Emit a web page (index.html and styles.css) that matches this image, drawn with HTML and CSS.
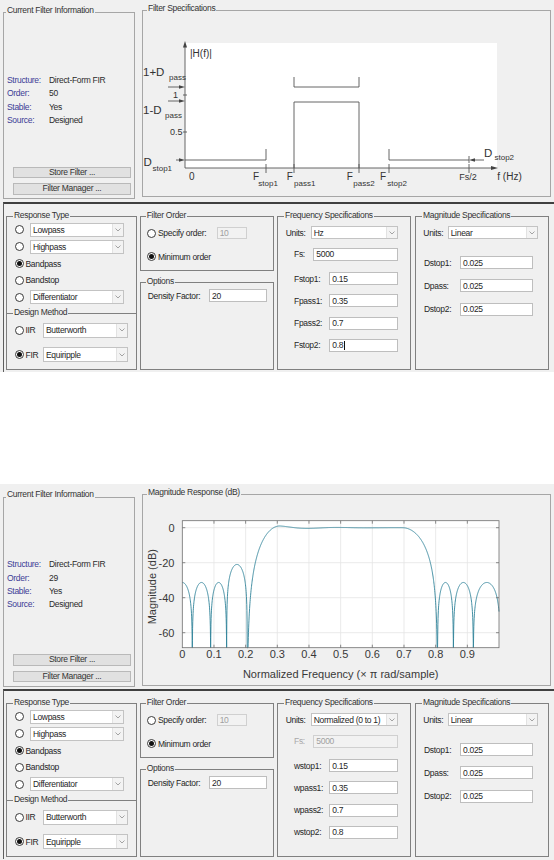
FILE: index.html
```html
<!DOCTYPE html>
<html>
<head>
<meta charset="utf-8">
<title>Filter Designer</title>
<link rel="stylesheet" href="styles.css">
</head>
<body>

<div class="shot">
  <div class="top-row">
    <div class="panel info-panel">
      <div class="ptitle">Current Filter Information</div>
      <div class="info">
        <div class="info-row"><span class="ilabel">Structure:</span><span>Direct-Form FIR</span></div>
        <div class="info-row"><span class="ilabel">Order:</span><span>50</span></div>
        <div class="info-row"><span class="ilabel">Stable:</span><span>Yes</span></div>
        <div class="info-row"><span class="ilabel">Source:</span><span>Designed</span></div>
      </div>
      <div class="btns">
        <div class="btn">Store Filter ...</div>
        <div class="btn">Filter Manager ...</div>
      </div>
    </div>
    <div class="panel spec-panel">
      <div class="ptitle">Filter Specifications</div>
      <svg class="plot spec-plot" width="407" height="185" viewBox="143 11 407 185">
        <rect x="185" y="43" width="312" height="125" fill="#ffffff"/>
        <g class="ln">
          <path d="M185 168 V46"/>
          <path d="M185 168 H492"/>
          <path d="M183 95 H187 M183 132 H187"/>
          <path d="M168 87 H180 M168 101 H180 M176 160 H180"/>
          <path d="M185 160 H266 M266 160 V149"/>
          <path d="M266 164 V173 M294 164 V173 M359 164 V173 M389 164 V173 M469 164 V173"/>
          <path d="M294 77 V87 H359 V77"/>
          <path d="M294 168 V102 H359 V168"/>
          <path d="M389 149 V160 H469 M469 156 V163"/>
          <path d="M484 160 H475"/>
        </g>
        <g class="arr">
          <polygon points="185,41 183,47.5 187,47.5"/>
          <polygon points="498,168 491,166 491,170"/>
          <polygon points="185,87 179,85.2 179,88.8"/>
          <polygon points="185,101 179,99.2 179,102.8"/>
          <polygon points="185,160 179,158.2 179,161.8"/>
          <polygon points="469,160 475,158.2 475,161.8"/>
        </g>
        <g class="lbl">
          <text x="190" y="56.5" class="t10">|H(f)|</text>
          <text x="143" y="76.3" class="t11">1+D</text><text x="169" y="80" class="t8">pass</text>
          <text x="173" y="98.3" class="t9">1</text>
          <text x="143" y="113.5" class="t11">1-D</text><text x="165" y="117.8" class="t8">pass</text>
          <text x="170" y="135" class="t9">0.5</text>
          <text x="143.5" y="166" class="t11">D</text><text x="152.5" y="171" class="t8">stop1</text>
          <text x="189" y="180.3" class="t10">0</text>
          <text x="253" y="180.3" class="t10">F</text><text x="258.3" y="185.5" class="t8">stop1</text>
          <text x="286.7" y="180.3" class="t10">F</text><text x="294" y="185.5" class="t8">pass1</text>
          <text x="346.7" y="180.3" class="t10">F</text><text x="353.3" y="185.5" class="t8">pass2</text>
          <text x="380" y="180.3" class="t10">F</text><text x="387.3" y="185.5" class="t8">stop2</text>
          <text x="459.3" y="180.3" class="t9">Fs/2</text>
          <text x="497.3" y="180.3" class="t10">f (Hz)</text>
          <text x="484" y="157" class="t11">D</text><text x="494.5" y="160" class="t8">stop2</text>
        </g>
      </svg>
    </div>
  </div>

  <div class="bottom">
    <div class="col col-rt">
      <div class="box rt-box">
        <div class="ptitle">Response Type</div>
        <div class="row rt-row"><span class="radio"></span><div class="sel rt-sel"><span class="sel-text">Lowpass</span><span class="sel-arr"><svg class="chev" width="6" height="4" viewBox="0 0 6 4"><path d="M0.5 0.5 L3 3 L5.5 0.5"/></svg></span></div></div>
        <div class="row rt-row"><span class="radio"></span><div class="sel rt-sel"><span class="sel-text">Highpass</span><span class="sel-arr"><svg class="chev" width="6" height="4" viewBox="0 0 6 4"><path d="M0.5 0.5 L3 3 L5.5 0.5"/></svg></span></div></div>
        <div class="row rt-row"><span class="radio on"></span><span class="rlabel">Bandpass</span></div>
        <div class="row rt-row"><span class="radio"></span><span class="rlabel">Bandstop</span></div>
        <div class="row rt-row"><span class="radio"></span><div class="sel rt-sel"><span class="sel-text">Differentiator</span><span class="sel-arr"><svg class="chev" width="6" height="4" viewBox="0 0 6 4"><path d="M0.5 0.5 L3 3 L5.5 0.5"/></svg></span></div></div>
      </div>
      <div class="box dm-box">
        <div class="ptitle">Design Method</div>
        <div class="row dm-row"><span class="radio"></span><span class="mlabel">IIR</span><div class="sel dm-sel"><span class="sel-text">Butterworth</span><span class="sel-arr"><svg class="chev" width="6" height="4" viewBox="0 0 6 4"><path d="M0.5 0.5 L3 3 L5.5 0.5"/></svg></span></div></div>
        <div class="row dm-row"><span class="radio on"></span><span class="mlabel">FIR</span><div class="sel dm-sel"><span class="sel-text">Equiripple</span><span class="sel-arr"><svg class="chev" width="6" height="4" viewBox="0 0 6 4"><path d="M0.5 0.5 L3 3 L5.5 0.5"/></svg></span></div></div>
      </div>
    </div>
    <div class="col col-fo">
      <div class="box fo-box">
        <div class="ptitle">Filter Order</div>
        <div class="row fo-row"><span class="radio"></span><span class="olabel">Specify order:</span><span class="inp dis fo-inp">10</span></div>
        <div class="row fo-row"><span class="radio on"></span><span class="olabel">Minimum order</span></div>
      </div>
      <div class="box opt-box">
        <div class="ptitle">Options</div>
        <div class="row opt-row"><span class="optlabel">Density Factor:</span><span class="inp opt-inp">20</span></div>
      </div>
    </div>
    <div class="box fs-box">
      <div class="ptitle">Frequency Specifications</div>
      <div class="row fs-units"><span class="ulabel">Units:</span><div class="sel fs-sel"><span class="sel-text">Hz</span><span class="sel-arr"><svg class="chev" width="6" height="4" viewBox="0 0 6 4"><path d="M0.5 0.5 L3 3 L5.5 0.5"/></svg></span></div></div>
      <div class="row fs-fs"><span class="fslabel">Fs:</span><span class="inp fs-inp">5000</span></div>
      <div class="row fs-f"><span class="flabel">Fstop1:</span><span class="inp f-inp">0.15</span></div>
      <div class="row fs-f"><span class="flabel">Fpass1:</span><span class="inp f-inp">0.35</span></div>
      <div class="row fs-f"><span class="flabel">Fpass2:</span><span class="inp f-inp">0.7</span></div>
      <div class="row fs-f"><span class="flabel">Fstop2:</span><span class="inp f-inp">0.8<span class="caret"></span></span></div>
    </div>
    <div class="box ms-box">
      <div class="ptitle">Magnitude Specifications</div>
      <div class="row ms-units"><span class="mulabel">Units:</span><div class="sel ms-sel"><span class="sel-text">Linear</span><span class="sel-arr"><svg class="chev" width="6" height="4" viewBox="0 0 6 4"><path d="M0.5 0.5 L3 3 L5.5 0.5"/></svg></span></div></div>
      <div class="row ms-d"><span class="dlabel">Dstop1:</span><span class="inp d-inp">0.025</span></div>
      <div class="row ms-d"><span class="dlabel">Dpass:</span><span class="inp d-inp">0.025</span></div>
      <div class="row ms-d"><span class="dlabel">Dstop2:</span><span class="inp d-inp">0.025</span></div>
    </div>
  </div>
</div>

<div class="shot shot2">
  <div class="top-row">
    <div class="panel info-panel">
      <div class="ptitle">Current Filter Information</div>
      <div class="info">
        <div class="info-row"><span class="ilabel">Structure:</span><span>Direct-Form FIR</span></div>
        <div class="info-row"><span class="ilabel">Order:</span><span>29</span></div>
        <div class="info-row"><span class="ilabel">Stable:</span><span>Yes</span></div>
        <div class="info-row"><span class="ilabel">Source:</span><span>Designed</span></div>
      </div>
      <div class="btns">
        <div class="btn">Store Filter ...</div>
        <div class="btn">Filter Manager ...</div>
      </div>
    </div>
    <div class="panel spec-panel">
      <div class="ptitle">Magnitude Response (dB)</div>
      <svg class="plot mag-plot" width="407" height="190" viewBox="143 11 407 190">
        <rect x="182.3" y="36.7" width="316.7" height="127" fill="#ffffff"/>
        <g class="grid">
          <path d="M213.97 36.7 V163.7 M245.64 36.7 V163.7 M277.31 36.7 V163.7 M308.98 36.7 V163.7 M340.65 36.7 V163.7 M372.32 36.7 V163.7 M403.99 36.7 V163.7 M435.66 36.7 V163.7 M467.33 36.7 V163.7"/>
          <path d="M182.3 43.7 H499 M182.3 78.7 H499 M182.3 113.7 H499 M182.3 148.7 H499"/>
        </g>
        <path id="resp" class="resp" d=""/>
        <g class="axis">
          <rect x="182.3" y="36.7" width="316.7" height="127" fill="none"/>
          <path d="M213.97 163.7 v-3 M245.64 163.7 v-3 M277.31 163.7 v-3 M308.98 163.7 v-3 M340.65 163.7 v-3 M372.32 163.7 v-3 M403.99 163.7 v-3 M435.66 163.7 v-3 M467.33 163.7 v-3"/>
          <path d="M213.97 36.7 v3 M245.64 36.7 v3 M277.31 36.7 v3 M308.98 36.7 v3 M340.65 36.7 v3 M372.32 36.7 v3 M403.99 36.7 v3 M435.66 36.7 v3 M467.33 36.7 v3"/>
          <path d="M182.3 43.7 h3 M182.3 78.7 h3 M182.3 113.7 h3 M182.3 148.7 h3 M499 43.7 h-3 M499 78.7 h-3 M499 113.7 h-3 M499 148.7 h-3"/>
        </g>
        <g class="tick">
          <text x="174.5" y="47.7" text-anchor="end">0</text>
          <text x="174.5" y="82.7" text-anchor="end">-20</text>
          <text x="174.5" y="117.7" text-anchor="end">-40</text>
          <text x="174.5" y="152.7" text-anchor="end">-60</text>
          <text x="182.3" y="174" text-anchor="middle">0</text>
          <text x="213.97" y="174" text-anchor="middle">0.1</text>
          <text x="245.64" y="174" text-anchor="middle">0.2</text>
          <text x="277.31" y="174" text-anchor="middle">0.3</text>
          <text x="308.98" y="174" text-anchor="middle">0.4</text>
          <text x="340.65" y="174" text-anchor="middle">0.5</text>
          <text x="372.32" y="174" text-anchor="middle">0.6</text>
          <text x="403.99" y="174" text-anchor="middle">0.7</text>
          <text x="435.66" y="174" text-anchor="middle">0.8</text>
          <text x="467.33" y="174" text-anchor="middle">0.9</text>
          <text x="340.7" y="193.5" text-anchor="middle">Normalized Frequency (× π rad/sample)</text>
          <text x="156.5" y="102.7" text-anchor="middle" transform="rotate(-90 156.5 102.7)">Magnitude (dB)</text>
        </g>
      </svg>
    </div>
  </div>

  <div class="bottom">
    <div class="col col-rt">
      <div class="box rt-box">
        <div class="ptitle">Response Type</div>
        <div class="row rt-row"><span class="radio"></span><div class="sel rt-sel"><span class="sel-text">Lowpass</span><span class="sel-arr"><svg class="chev" width="6" height="4" viewBox="0 0 6 4"><path d="M0.5 0.5 L3 3 L5.5 0.5"/></svg></span></div></div>
        <div class="row rt-row"><span class="radio"></span><div class="sel rt-sel"><span class="sel-text">Highpass</span><span class="sel-arr"><svg class="chev" width="6" height="4" viewBox="0 0 6 4"><path d="M0.5 0.5 L3 3 L5.5 0.5"/></svg></span></div></div>
        <div class="row rt-row"><span class="radio on"></span><span class="rlabel">Bandpass</span></div>
        <div class="row rt-row"><span class="radio"></span><span class="rlabel">Bandstop</span></div>
        <div class="row rt-row"><span class="radio"></span><div class="sel rt-sel"><span class="sel-text">Differentiator</span><span class="sel-arr"><svg class="chev" width="6" height="4" viewBox="0 0 6 4"><path d="M0.5 0.5 L3 3 L5.5 0.5"/></svg></span></div></div>
      </div>
      <div class="box dm-box">
        <div class="ptitle">Design Method</div>
        <div class="row dm-row"><span class="radio"></span><span class="mlabel">IIR</span><div class="sel dm-sel"><span class="sel-text">Butterworth</span><span class="sel-arr"><svg class="chev" width="6" height="4" viewBox="0 0 6 4"><path d="M0.5 0.5 L3 3 L5.5 0.5"/></svg></span></div></div>
        <div class="row dm-row"><span class="radio on"></span><span class="mlabel">FIR</span><div class="sel dm-sel"><span class="sel-text">Equiripple</span><span class="sel-arr"><svg class="chev" width="6" height="4" viewBox="0 0 6 4"><path d="M0.5 0.5 L3 3 L5.5 0.5"/></svg></span></div></div>
      </div>
    </div>
    <div class="col col-fo">
      <div class="box fo-box">
        <div class="ptitle">Filter Order</div>
        <div class="row fo-row"><span class="radio"></span><span class="olabel">Specify order:</span><span class="inp dis fo-inp">10</span></div>
        <div class="row fo-row"><span class="radio on"></span><span class="olabel">Minimum order</span></div>
      </div>
      <div class="box opt-box">
        <div class="ptitle">Options</div>
        <div class="row opt-row"><span class="optlabel">Density Factor:</span><span class="inp opt-inp">20</span></div>
      </div>
    </div>
    <div class="box fs-box">
      <div class="ptitle">Frequency Specifications</div>
      <div class="row fs-units"><span class="ulabel">Units:</span><div class="sel fs-sel"><span class="sel-text">Normalized (0 to 1)</span><span class="sel-arr"><svg class="chev" width="6" height="4" viewBox="0 0 6 4"><path d="M0.5 0.5 L3 3 L5.5 0.5"/></svg></span></div></div>
      <div class="row fs-fs"><span class="fslabel dis-label">Fs:</span><span class="inp dis fs-inp">5000</span></div>
      <div class="row fs-f"><span class="flabel">wstop1:</span><span class="inp f-inp">0.15</span></div>
      <div class="row fs-f"><span class="flabel">wpass1:</span><span class="inp f-inp">0.35</span></div>
      <div class="row fs-f"><span class="flabel">wpass2:</span><span class="inp f-inp">0.7</span></div>
      <div class="row fs-f"><span class="flabel">wstop2:</span><span class="inp f-inp">0.8</span></div>
    </div>
    <div class="box ms-box">
      <div class="ptitle">Magnitude Specifications</div>
      <div class="row ms-units"><span class="mulabel">Units:</span><div class="sel ms-sel"><span class="sel-text">Linear</span><span class="sel-arr"><svg class="chev" width="6" height="4" viewBox="0 0 6 4"><path d="M0.5 0.5 L3 3 L5.5 0.5"/></svg></span></div></div>
      <div class="row ms-d"><span class="dlabel">Dstop1:</span><span class="inp d-inp">0.025</span></div>
      <div class="row ms-d"><span class="dlabel">Dpass:</span><span class="inp d-inp">0.025</span></div>
      <div class="row ms-d"><span class="dlabel">Dstop2:</span><span class="inp d-inp">0.025</span></div>
    </div>
  </div>
</div>

<script src="script.js"></script>
</body>
</html>
```

FILE: styles.css
```css
* { box-sizing: border-box; }
body {
  margin: 0;
  background: #ffffff;
  font-family: "Liberation Sans", Arial, sans-serif;
  font-size: 8.5px;
  letter-spacing: -0.3px;
  color: #262626;
}
.shot { background: #f0f0f0; height: 372px; overflow: hidden; }
.shot2 { margin-top: 112px; height: 376px; }

.top-row { display: flex; align-items: flex-start; height: 202px; padding-left: 3px; }
.shot2 .top-row { height: 205px; }

.panel { position: relative; border: 1px solid #a6a6a6; }
.ptitle {
  position: absolute;
  top: -8.5px;
  left: 2px;
  padding: 0 1px;
  background: #f0f0f0;
  line-height: 10px;
  white-space: nowrap;
  color: #333333;
}

.info-panel {
  margin-top: 12px;
  width: 132px;
  height: 187px;
  display: flex;
  flex-direction: column;
  padding: 0 0 3.5px 3px;
}
.shot2 .info-panel { margin-top: 12.5px; height: 190px; }
.info { margin-top: 60.3px; }
.info-row { display: flex; align-items: center; height: 13.33px; color: #2b2b2b; }
.ilabel { width: 42px; color: #3c3c96; }
.btns { margin-top: auto; display: flex; flex-direction: column; gap: 5px; padding-left: 6px; }
.btn {
  width: 118px;
  height: 11.5px;
  background: #e1e1e1;
  border: 1px solid #b9b9b9;
  text-align: center;
  line-height: 9.5px;
  color: #333333;
}

.spec-panel { margin-top: 10px; margin-left: 7px; width: 409px; height: 187px; }
.shot2 .spec-panel { height: 192px; }
.spec-panel .ptitle { left: 4px; }
.plot { display: block; }

.ln path { fill: none; stroke: #555555; stroke-width: 0.9; }
.arr polygon { fill: #444444; }
.lbl text { font-family: "Liberation Sans", Arial, sans-serif; fill: #333333; letter-spacing: 0; }
.t8 { font-size: 8px; }
.t9 { font-size: 9px; }
.t10 { font-size: 10px; }
.t11 { font-size: 11.5px; }

.grid path { fill: none; stroke: #e4e4e4; stroke-width: 0.8; }
.axis rect, .axis path { fill: none; stroke: #6e6e6e; stroke-width: 0.8; }
.resp { fill: none; stroke: #2f8298; stroke-width: 0.9; }
.tick text { font-family: "Liberation Sans", Arial, sans-serif; font-size: 11px; fill: #383838; letter-spacing: 0; }

/* lower control area */
.bottom {
  display: flex;
  margin-left: 3px;
  height: 170px;
  border-top: 2px solid #404040;
  border-left: 1px solid #5e5e5e;
  padding: 12px 0 0 2px;
  gap: 3px;
}
.col { display: flex; flex-direction: column; }
.col-rt { width: 131px; }
.col-fo { width: 134px; }
.box { position: relative; border: 1px solid #808080; }
.box .ptitle { top: -7.5px; left: 6px; }
.col-fo .box .ptitle { left: 4.7px; }

.row { display: flex; align-items: center; }

.radio {
  flex: none;
  width: 9px;
  height: 9px;
  border: 1px solid #3a3a3a;
  border-radius: 50%;
  background: #ffffff;
  display: flex;
  align-items: center;
  justify-content: center;
}
.radio.on::after {
  content: "";
  width: 5px;
  height: 5px;
  border-radius: 50%;
  background: #111111;
}

.sel {
  flex: none;
  display: flex;
  height: 14px;
  border: 1px solid #c3c3c3;
  background: #ffffff;
}
.sel-text { flex: 1; display: flex; align-items: center; padding-left: 2px; white-space: nowrap; overflow: hidden; color: #262626; }
.sel-arr {
  width: 11px;
  background: #f3f3f3;
  border-left: 1px solid #e2e2e2;
  display: flex;
  align-items: center;
  justify-content: center;
}
.chev path { fill: none; stroke: #9a9a9a; stroke-width: 0.9; }

.inp {
  flex: none;
  display: flex;
  align-items: center;
  height: 13px;
  border: 1px solid #bebebe;
  background: #ffffff;
  padding-left: 2px;
  white-space: nowrap;
  color: #262626;
}
.inp.dis { background: #f2f2f2; border-color: #d0d0d0; color: #a0a0a0; }
.dis-label { color: #a8a8a8; }
.caret { display: inline-block; width: 1px; height: 9px; background: #111111; margin-left: 0.5px; }

/* Response type */
.rt-box { height: 97px; border-bottom: none; padding: 4.6px 0 0 8px; }
.rt-row { height: 16.8px; }
.rt-sel { margin-left: 6px; width: 94px; }
.rlabel { margin-left: 1.5px; }

/* Design method */
.dm-box { height: 57px; padding: 8.5px 0 0 8px; }
.dm-row { height: 15px; }
.dm-row + .dm-row { margin-top: 9.5px; }
.mlabel { margin-left: 1.5px; width: 17.5px; }
.dm-sel { width: 85px; height: 15px; }

/* Filter order */
.fo-box { height: 55px; padding: 10px 0 0 6px; }
.fo-row { height: 12px; }
.fo-row + .fo-row { margin-top: 11.7px; }
.olabel { margin-left: 2px; width: 58.7px; white-space: nowrap; }
.fo-inp { width: 30.3px; height: 12px; }

/* Options */
.opt-box { margin-top: 11px; height: 88px; padding: 6px 0 0 6.7px; }
.opt-row { height: 13px; }
.optlabel { width: 61.3px; white-space: nowrap; }
.opt-inp { width: 57.7px; }

/* Frequency specs */
.fs-box { width: 134px; height: 154px; padding-top: 9px; }
.fs-units { height: 13px; }
.ulabel { margin-left: 7.7px; width: 25px; }
.fs-sel { width: 87.6px; height: 13px; }
.fs-fs { height: 13px; margin-top: 8.5px; }
.fslabel { margin-left: 16px; width: 19.3px; }
.fs-inp { width: 85px; }
.fs-f { height: 13px; margin-top: 9.3px; }
.fs-fs + .fs-f { margin-top: 11.5px; }
.flabel { margin-left: 16px; width: 35.3px; }
.f-inp { width: 69px; }

/* Magnitude specs */
.ms-box { width: 134px; height: 154px; margin-left: 1px; padding-top: 9px; }
.ms-units { height: 13px; }
.mulabel { margin-left: 7.3px; width: 24.4px; }
.ms-sel { width: 90.6px; height: 13px; }
.ms-d { height: 13px; margin-top: 10.3px; }
.ms-units + .ms-d { margin-top: 17px; }
.dlabel { margin-left: 8px; width: 36px; }
.d-inp { width: 73.3px; }
```

FILE: script.js
```javascript
(function () {
  var path = document.getElementById('resp');
  if (!path) return;
  var X0 = 182.3, XW = 316.7, Y0 = 43.7, K = 1.75, YB = 163.7;
  var PK = -31.3;

  function lobe(f, a, b, pk) {
    var s = Math.abs(Math.sin(Math.PI * (f - a) / (b - a)));
    return pk + 20 * Math.log10(Math.max(s, 1e-9));
  }

  function mag(f) {
    if (f < 0.0316) return lobe(f, -0.0316, 0.0316, PK);
    if (f < 0.0895) return lobe(f, 0.0316, 0.0895, PK);
    if (f < 0.14) return lobe(f, 0.0895, 0.14, PK);
    if (f < 0.205) return lobe(f, 0.14, 0.205, -21);
    if (f < 0.308) {
      var t = (f - 0.205) / 0.103;
      var a = 1.12 * Math.pow(Math.sin(Math.PI / 2 * t), 2.5);
      return 20 * Math.log10(Math.max(a, 1e-9));
    }
    if (f < 0.695) {
      var u = f - 0.308;
      return 0.98 * Math.cos(2 * Math.PI * u / 0.19) * Math.exp(-u / 0.1);
    }
    if (f < 0.806) {
      var v = (f - 0.695) / 0.111;
      var b = Math.pow(Math.cos(Math.PI / 2 * v), 2);
      return 20 * Math.log10(Math.max(b, 1e-9));
    }
    if (f < 0.856) return lobe(f, 0.806, 0.856, PK);
    if (f < 0.919) return lobe(f, 0.856, 0.919, PK);
    return lobe(f, 0.919, 1.004, PK);
  }

  var fs = [];
  for (var i = 0; i <= 2000; i++) fs.push(i / 2000);
  [0.0316, 0.0895, 0.14, 0.205, 0.806, 0.856, 0.919].forEach(function (n) { fs.push(n); });
  fs.sort(function (a, b) { return a - b; });

  var d = '';
  for (var j = 0; j < fs.length; j++) {
    var f = fs[j];
    var db = mag(f);
    var y = Y0 - db * K;
    if (y > YB) y = YB;
    var x = X0 + f * XW;
    d += (j === 0 ? 'M' : 'L') + x.toFixed(2) + ' ' + y.toFixed(2);
  }
  path.setAttribute('d', d);
})();
```
